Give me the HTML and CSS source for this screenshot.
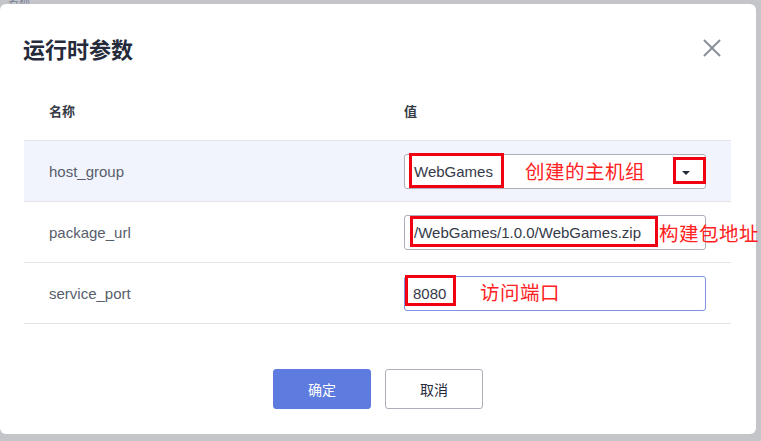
FILE: index.html
```html
<!DOCTYPE html>
<html lang="zh-CN">
<head>
<meta charset="utf-8">
<title>运行时参数</title>
<link rel="stylesheet" href="styles.css">
</head>
<body>
<div class="backdrop-strip"><span class="ghost">名称 ...</span></div>
<div class="dialog">
  <div class="header">
    <h1 class="title">运行时参数</h1>
    <button class="close" aria-label="关闭">
      <svg width="18" height="18" viewBox="0 0 18 18"><path d="M1 1L17 17M17 1L1 17" stroke="#8a8e99" stroke-width="2" fill="none"/></svg>
    </button>
  </div>
  <div class="table">
    <div class="row head">
      <div class="cell name">名称</div>
      <div class="cell value">值</div>
    </div>
    <div class="row hl">
      <div class="cell name">host_group</div>
      <div class="cell value">
        <div class="field">
          <div class="input select">
            <span class="val">WebGames</span>
            <span class="caret"></span>
          </div>
          <span class="mark m1"></span>
          <span class="mark m1b"></span>
          <span class="note n1">创建的主机组</span>
        </div>
      </div>
    </div>
    <div class="row">
      <div class="cell name">package_url</div>
      <div class="cell value">
        <div class="field">
          <div class="input"><span class="val">/WebGames/1.0.0/WebGames.zip</span></div>
          <span class="mark m2"></span>
          <span class="note n2">构建包地址</span>
        </div>
      </div>
    </div>
    <div class="row">
      <div class="cell name">service_port</div>
      <div class="cell value">
        <div class="field">
          <div class="input focus"><span class="val v3">8080</span></div>
          <span class="mark m3"></span>
          <span class="note n3">访问端口</span>
        </div>
      </div>
    </div>
  </div>
  <div class="footer">
    <button class="btn primary">确定</button>
    <button class="btn">取消</button>
  </div>
</div>
</body>
</html>
```
FILE: styles.css
```css
* { box-sizing: border-box; }
html, body { margin: 0; padding: 0; }
body {
  width: 761px;
  height: 441px;
  overflow: hidden;
  background: #c4c5c9;
  font-family: "Liberation Sans", Arial, "Noto Sans CJK SC", sans-serif;
  position: relative;
}
.backdrop-strip {
  height: 4px;
  overflow: hidden;
  position: relative;
}
.ghost {
  position: absolute;
  left: 8px;
  top: -8px;
  font-size: 11px;
  color: #7a7f99;
}
.dialog {
  width: 756px;
  height: 430px;
  background: #fff;
  border-radius: 6px;
  display: flex;
  flex-direction: column;
  padding: 0 24px;
}
.header {
  display: flex;
  justify-content: space-between;
  align-items: center;
  height: 77px;
  padding-top: 10px;
}
.title {
  margin: 0;
  font-family: "Noto Sans CJK SC", sans-serif;
  font-size: 22px;
  font-weight: 700;
  color: #252b3a;
  line-height: 30px;
  margin-left: -1px;
}
.close {
  border: 0;
  background: none;
  padding: 0;
  margin-right: 11px;
  width: 18px;
  height: 18px;
  display: flex;
}
.table {
  width: 707px;
}
.row {
  display: flex;
  align-items: center;
  height: 61px;
  border-bottom: 1px solid #e3e5ea;
}
.row.head {
  height: 60px;
  border-bottom: 1px solid #e3e5ea;
}
.row.hl { background: #f1f4fc; }
.cell {
  font-size: 15px;
  color: #575d6c;
}
.cell.name {
  width: 380px;
  padding-left: 25px;
}
.head .cell {
  font-family: "Noto Sans CJK SC", sans-serif;
  font-size: 13px;
  font-weight: 700;
  color: #353a44;
}
.field {
  position: relative;
  width: 302px;
  height: 35px;
}
.input {
  width: 302px;
  height: 35px;
  border: 1px solid #adb0b8;
  border-radius: 3px;
  background: #fff;
  display: flex;
  align-items: center;
  padding-left: 9px;
  font-size: 15px;
  color: #353a48;
}
.input.focus { border-color: #7e93e0; }
.val.v3 { margin-left: -1px; }
.select { position: relative; }
.caret {
  position: absolute;
  right: 15px;
  top: 16px;
  width: 0;
  height: 0;
  border-left: 4px solid transparent;
  border-right: 4px solid transparent;
  border-top: 4px solid #252b3a;
}
.mark {
  position: absolute;
  border: 3px solid #f00010;
}
.m1 { left: 5px; top: -1px; width: 95px; height: 35px; }
.m1b { left: 269px; top: 3px; width: 33px; height: 27px; }
.m2 { left: 6px; top: 1px; width: 248px; height: 31px; }
.m3 { left: 1px; top: -1px; width: 51px; height: 31px; }
.note {
  position: absolute;
  font-family: "Noto Sans CJK SC", sans-serif;
  font-size: 19.5px;
  line-height: 24px;
  color: #f22;
  white-space: nowrap;
  letter-spacing: 0.5px;
}
.n1 { left: 121px; top: 5px; }
.n2 { left: 255px; top: 6px; }
.n3 { left: 76px; top: 4px; }
.footer {
  display: flex;
  justify-content: center;
  gap: 14px;
  margin-top: 45px;
  margin-left: -24px;
  margin-right: -24px;
}
.btn {
  width: 98px;
  height: 40px;
  border: 1px solid #adb0b8;
  border-radius: 3px;
  background: #fff;
  font-family: "Noto Sans CJK SC", sans-serif;
  font-size: 14px;
  color: #252b3a;
  padding: 0;
}
.btn.primary {
  background: #5e7ce0;
  border-color: #5e7ce0;
  color: #fff;
}
```
